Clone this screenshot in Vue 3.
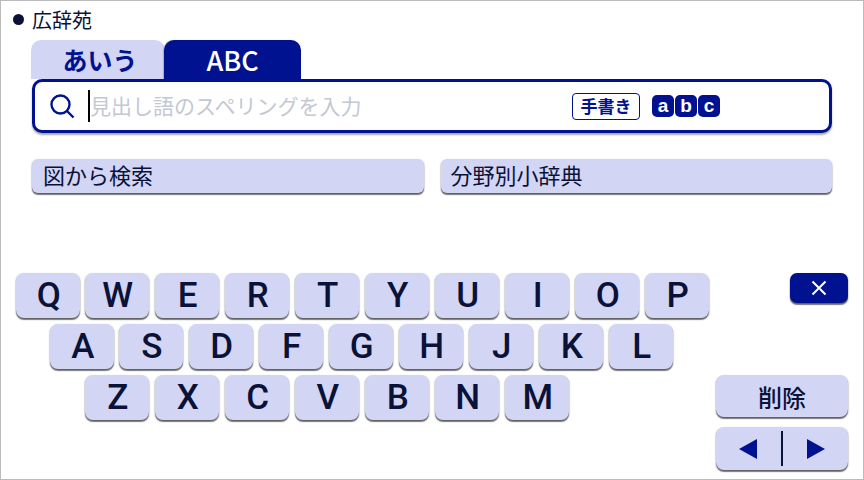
<script setup>
const rows = [
  { cls: 'r1', keys: ['Q','W','E','R','T','Y','U','I','O','P'] },
  { cls: 'r2', keys: ['A','S','D','F','G','H','J','K','L'] },
  { cls: 'r3', keys: ['Z','X','C','V','B','N','M'] },
]
</script>

<template>
  <div class="screen">
    <div class="title"><span class="dot"></span><span>広辞苑</span></div>
    <div class="tabs">
      <div class="tab off">あいう</div>
      <div class="tab on">ABC</div>
    </div>
    <div class="search">
      <svg class="glass" width="26" height="26" viewBox="0 0 26 26" fill="none" stroke="#00128f" stroke-width="2.4">
        <circle cx="11.5" cy="11.5" r="9" />
        <path d="M18 18 L24.5 24.5" />
      </svg>
      <span class="caret"></span>
      <span class="placeholder">見出し語のスペリングを入力</span>
      <span class="hand">手書き</span>
      <span class="abc"><b>a</b><b>b</b><b>c</b></span>
    </div>
    <div class="links">
      <div class="link">図から検索</div>
      <div class="link">分野別小辞典</div>
    </div>
    <div class="board">
      <div class="keys">
        <div v-for="row in rows" :key="row.cls" class="row" :class="row.cls">
          <div v-for="k in row.keys" :key="k" class="key">{{ k }}</div>
        </div>
      </div>
      <div class="side">
        <div class="close">
          <svg width="16" height="16" viewBox="0 0 16 16" stroke="#fff" stroke-width="2"><path d="M1.5 1.5 L14.5 14.5 M14.5 1.5 L1.5 14.5" /></svg>
        </div>
        <div class="del">削除</div>
        <div class="arrows">
          <svg width="18" height="20" viewBox="0 0 18 20"><path d="M0 10 L18 0 V20 Z" fill="#00128f" /></svg>
          <span class="sep"></span>
          <svg width="18" height="20" viewBox="0 0 18 20"><path d="M18 10 L0 0 V20 Z" fill="#00128f" /></svg>
        </div>
      </div>
    </div>
  </div>
</template>

<style>
html, body { margin: 0; background: #fff; }
</style>

<style scoped>
.screen {
  width: 864px;
  height: 480px;
  box-sizing: border-box;
  border: 1px solid #bbb;
  background: #fff;
  overflow: hidden;
  font-family: "Noto Sans CJK JP", "Noto Sans", sans-serif;
  color: #0a1238;
  display: flex;
  flex-direction: column;
}
.title {
  height: 37px;
  margin-bottom: 2px;
  padding-left: 12px;
  display: flex;
  align-items: center;
  gap: 8px;
  font-size: 20px;
}
.dot {
  width: 11px;
  height: 11px;
  border-radius: 50%;
  background: #0a1238;
}
.tabs {
  display: flex;
  padding-left: 30px;
  height: 39px;
}
.tab {
  display: flex;
  align-items: center;
  justify-content: center;
  border-radius: 10px 10px 0 0;
  line-height: 1;
}
.off {
  width: 134px;
  box-sizing: border-box;
  padding: 0 0 0 4px;
  background: #d3d5f4;
  color: #00128f;
  font-size: 25px;
  font-weight: 700;
}
.on {
  width: 137px;
  margin-left: -1px;
  padding-bottom: 1px;
  box-sizing: border-box;
  background: #00128f;
  color: #fff;
  font-size: 27px;
  font-weight: 500;
  box-shadow: -1px 0 1px rgba(0,0,0,.2);
}
.search {
  margin-left: 31px;
  width: 800px;
  height: 54px;
  box-sizing: border-box;
  border: 3px solid #00128f;
  border-radius: 10px;
  background: #fff;
  box-shadow: 0 2px 2px rgba(0,0,0,.35);
  display: flex;
  align-items: center;
  position: relative;
  z-index: 1;
}
.glass { margin-left: 14px; flex: none; }
.caret {
  width: 2px;
  height: 32px;
  background: #000;
  margin-left: 13px;
  flex: none;
}
.placeholder {
  font-size: 21px;
  color: #c3c8d2;
  width: 482px;
  flex: none;
  padding-bottom: 2px;
  box-sizing: border-box;
}
.hand {
  width: 68px;
  height: 27px;
  box-sizing: border-box;
  border: 1.5px solid #00128f;
  border-radius: 4px;
  color: #00128f;
  font-size: 17px;
  font-weight: 700;
  padding-bottom: 2px;
  display: flex;
  align-items: center;
  justify-content: center;
  flex: none;
}
.abc {
  display: flex;
  gap: 1px;
  margin-left: 12px;
}
.abc b {
  width: 22px;
  height: 22px;
  box-sizing: border-box;
  padding-bottom: 1px;
  border-radius: 5px;
  background: #00128f;
  color: #fff;
  font-family: "Liberation Sans", sans-serif;
  font-size: 19px;
  display: flex;
  align-items: center;
  justify-content: center;
}
.links {
  display: flex;
  gap: 17px;
  margin: 26px 0 0 31px;
}
.link {
  width: 391.5px;
  height: 34px;
  box-sizing: border-box;
  padding: 0 0 4px 11px;
  background: #d3d5f4;
  border-radius: 6px;
  box-shadow: 0 1px 2px rgba(0,0,0,.4), 0 2px 1px rgba(0,0,0,.45);
  font-size: 22px;
  display: flex;
  align-items: center;
}
.link + .link { padding-left: 10px; }
.board {
  display: flex;
  margin-top: 80px;
  padding-left: 15px;
}
.keys {
  width: 700px;
  display: flex;
  flex-direction: column;
  gap: 6px;
}
.row { display: flex; gap: 6px; }
.r2 { padding-left: 34px; }
.r3 { padding-left: 69px; }
.r1 .key:first-child, .r2 .key:first-child { margin-right: -1px; }
.key {
  width: 64px;
  height: 45px;
  box-sizing: border-box;
  padding-left: 1.5px;
  background: #d3d5f4;
  border-radius: 8px;
  box-shadow: 0 1px 2px rgba(0,0,0,.4), 0 2px 1px rgba(0,0,0,.45);
  font-family: Roboto, sans-serif;
  font-weight: 500;
  font-size: 35px;
  line-height: 46px;
  text-align: center;
}
.side {
  width: 132px;
  display: flex;
  flex-direction: column;
  align-items: flex-end;
}
.close {
  width: 58px;
  height: 30px;
  background: #00128f;
  border-radius: 7px;
  box-shadow: 0 1px 2px rgba(0,0,0,.4), 0 2px 1px rgba(0,0,0,.45);
  display: flex;
  align-items: center;
  justify-content: center;
}
.del {
  width: 132px;
  height: 42px;
  margin-top: 72px;
  background: #d3d5f4;
  border-radius: 8px;
  box-shadow: 0 1px 2px rgba(0,0,0,.4), 0 2px 1px rgba(0,0,0,.45);
  font-size: 24px;
  font-weight: 500;
  display: flex;
  align-items: center;
  justify-content: center;
}
.arrows {
  width: 132px;
  height: 43px;
  margin-top: 10px;
  background: #d3d5f4;
  border-radius: 8px;
  box-shadow: 0 1px 2px rgba(0,0,0,.4), 0 2px 1px rgba(0,0,0,.45);
  display: flex;
  align-items: center;
  justify-content: center;
  gap: 24px;
}
.sep {
  width: 2px;
  height: 35px;
  background: #0a1238;
}
</style>
